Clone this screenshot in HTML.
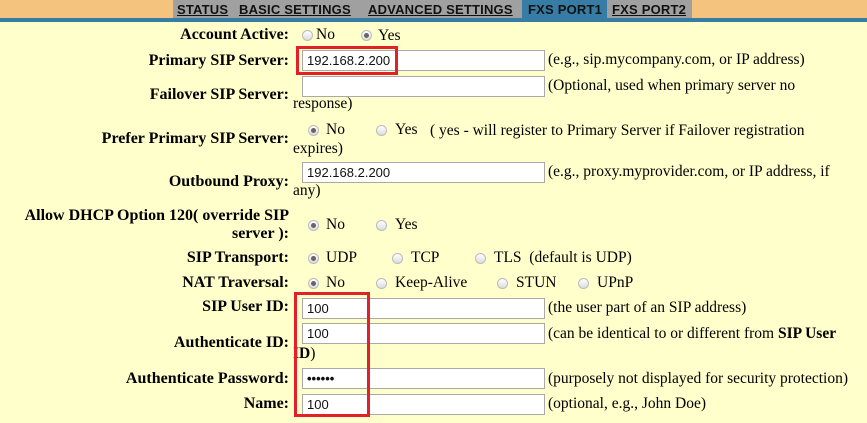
<!DOCTYPE html>
<html><head><meta charset="utf-8"><style>
body{margin:0;width:867px;height:423px;overflow:hidden;background:#ffffcc;position:relative;font-family:"Liberation Serif",serif;font-size:15.5px;color:#000}
.top{position:absolute;left:0;top:0;width:867px;height:18px;background:#f4c47f}
.line{position:absolute;left:0;top:18px;width:867px;height:4px;background:#367ca4}
.tabs{position:absolute;left:173px;top:0;height:18px;width:519px;background:#a0a0a0}
.tab{position:absolute;top:2px;font-family:"Liberation Sans",sans-serif;font-weight:bold;font-size:13px;letter-spacing:0.2px;line-height:16px;text-decoration:underline;color:#111}
.lab{position:absolute;right:578px;font-weight:bold;font-size:16px;text-align:right;white-space:nowrap;line-height:18px}
.t{position:absolute;white-space:nowrap;line-height:18px}
.in{position:absolute;left:302px;border:1px solid #a9a9a9;background:#fff;font-family:"Liberation Sans",sans-serif;font-size:13px;line-height:19px;padding-left:4px;box-sizing:border-box;width:243px;height:21px;color:#111}
.r{position:absolute;width:11px;height:11px;border-radius:50%;border:1px solid #bbb;background:linear-gradient(#fff,#ddd);box-sizing:border-box}
.r.on::after{content:"";position:absolute;left:2px;top:2px;width:5px;height:5px;border-radius:50%;background:#666}
.red{position:absolute;border:3px solid #e3202a;box-sizing:border-box}
</style></head><body>
<div class="top"></div><div class="line"></div>
<div class="tabs"></div>
<div style="position:absolute;left:522px;top:0;width:85px;height:18px;background:#367ca4"></div>
<span class="tab" style="left:177px">STATUS</span>
<span class="tab" style="left:239px">BASIC SETTINGS</span>
<span class="tab" style="left:368px">ADVANCED SETTINGS</span>
<span class="tab" style="left:528px;text-decoration:none">FXS PORT1</span>
<span class="tab" style="left:612px">FXS PORT2</span>

<div class="lab" style="top:26px">Account Active:</div>
<div class="r" style="left:302px;top:30px"></div><div class="t" style="left:316px;top:26px">No</div>
<div class="r on" style="left:361px;top:30px"></div><div class="t" style="left:378px;top:27px">Yes</div>

<div class="lab" style="top:52px">Primary SIP Server:</div>
<div class="in" style="top:50px">192.168.2.200</div>
<div class="t" style="left:548px;top:51px">(e.g., sip.mycompany.com, or IP address)</div>
<div class="red" style="left:296px;top:46px;width:102px;height:29px"></div>

<div class="lab" style="top:86px">Failover SIP Server:</div>
<div class="in" style="top:76px"></div>
<div class="t" style="left:548px;top:77px">(Optional, used when primary server no</div>
<div class="t" style="left:293px;top:95px">response)</div>

<div class="lab" style="top:130px">Prefer Primary SIP Server:</div>
<div class="r on" style="left:308px;top:125px"></div><div class="t" style="left:326px;top:121px">No</div>
<div class="r" style="left:376px;top:125px"></div><div class="t" style="left:395px;top:121px">Yes</div>
<div class="t" style="left:430px;top:122px">( yes - will register to Primary Server if Failover registration</div>
<div class="t" style="left:293px;top:140px">expires)</div>

<div class="lab" style="top:173px">Outbound Proxy:</div>
<div class="in" style="top:162px">192.168.2.200</div>
<div class="t" style="left:548px;top:163px">(e.g., proxy.myprovider.com, or IP address, if</div>
<div class="t" style="left:293px;top:182px">any)</div>

<div class="lab" style="top:207px">Allow DHCP Option 120( override SIP</div>
<div class="lab" style="top:225px">server ):</div>
<div class="r on" style="left:308px;top:220px"></div><div class="t" style="left:326px;top:216px">No</div>
<div class="r" style="left:376px;top:220px"></div><div class="t" style="left:395px;top:216px">Yes</div>

<div class="lab" style="top:249px">SIP Transport:</div>
<div class="r on" style="left:308px;top:253px"></div><div class="t" style="left:326px;top:249px">UDP</div>
<div class="r" style="left:392px;top:253px"></div><div class="t" style="left:411px;top:249px">TCP</div>
<div class="r" style="left:475px;top:253px"></div><div class="t" style="left:494px;top:249px">TLS &nbsp;(default is UDP)</div>

<div class="lab" style="top:274px">NAT Traversal:</div>
<div class="r on" style="left:308px;top:278px"></div><div class="t" style="left:326px;top:274px">No</div>
<div class="r" style="left:376px;top:278px"></div><div class="t" style="left:395px;top:274px">Keep-Alive</div>
<div class="r" style="left:497px;top:278px"></div><div class="t" style="left:516px;top:274px">STUN</div>
<div class="r" style="left:578px;top:278px"></div><div class="t" style="left:597px;top:274px">UPnP</div>

<div class="lab" style="top:298px">SIP User ID:</div>
<div class="in" style="top:298px">100</div>
<div class="t" style="left:548px;top:299px">(the user part of an SIP address)</div>

<div class="lab" style="top:334px">Authenticate ID:</div>
<div class="in" style="top:323px">100</div>
<div class="t" style="left:548px;top:325px">(can be identical to or different from <b>SIP User</b></div>
<div class="t" style="left:293px;top:345px"><b>ID</b>)</div>

<div class="lab" style="top:370px">Authenticate Password:</div>
<div class="in" style="top:368px;font-weight:bold">••••••</div>
<div class="t" style="left:548px;top:370px">(purposely not displayed for security protection)</div>

<div class="lab" style="top:395px">Name:</div>
<div class="in" style="top:394px">100</div>
<div class="t" style="left:548px;top:395px">(optional, e.g., John Doe)</div>

<div class="red" style="left:294px;top:292px;width:76px;height:125px"></div>
</body></html>
